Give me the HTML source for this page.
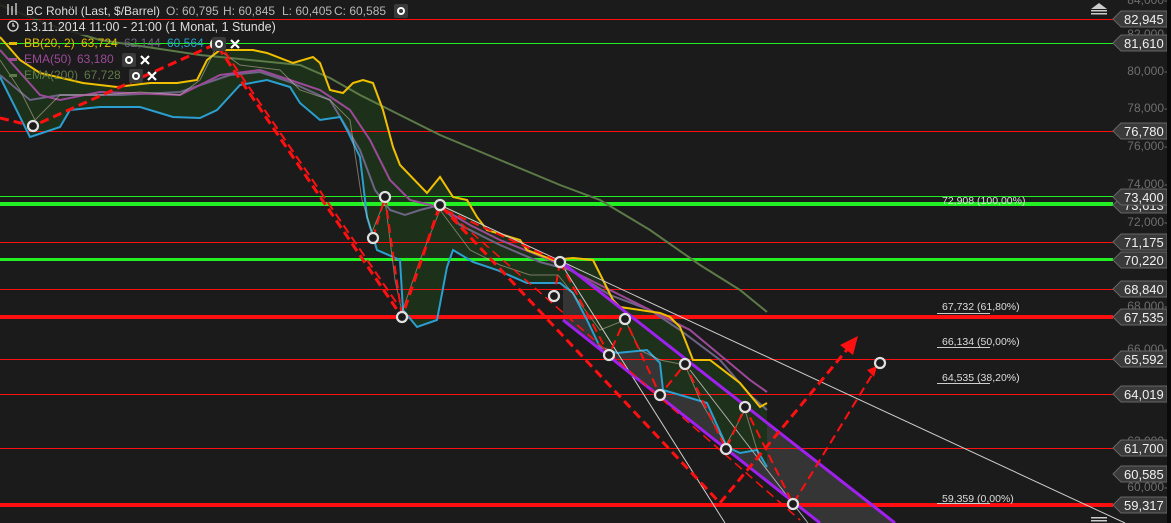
<!DOCTYPE html>
<html><head><meta charset="utf-8"><style>
html,body{margin:0;padding:0;background:#1c1b1b;width:1171px;height:523px;overflow:hidden}
svg{display:block;font-family:"Liberation Sans",sans-serif}
</style></head><body>
<svg width="1171" height="523" viewBox="0 0 1171 523">
<rect width="1171" height="523" fill="#1c1b1b"/>
<polygon points="563,263 895,523 820,523 563,320" fill="#3a3a3a" opacity="0.85"/>
<polygon fill="#1e3219" opacity="0.95" points="0,37 20,60 40,73 83,83 117,87 150,83 177,83 197,80 207,60 220,50 253,50 267,53 293,63 313,57 320,63 330,90 343,93 353,83 363,80 373,83 383,110 393,147 400,165 427,193 440,177 453,197 467,200 477,217 487,230 520,240 527,250 553,260 573,258 593,260 613,300 620,307 660,313 670,317 680,327 693,360 710,360 740,383 760,407 767,403 767,467 757,450 740,453 727,447 707,403 687,397 663,390 660,363 647,350 617,353 600,347 587,320 573,293 560,283 527,283 497,270 473,262 453,250 447,267 437,320 417,327 403,310 400,260 377,250 367,217 360,157 347,130 340,117 320,120 300,103 290,87 267,80 240,85 217,110 200,118 173,117 140,107 100,107 70,110 60,127 30,137 0,77"/>
<rect x="0" y="19" width="1113" height="1" fill="#ff1010"/>
<rect x="0" y="43" width="1113" height="1" fill="#20f020"/>
<rect x="0" y="131" width="1113" height="1" fill="#ff1010"/>
<rect x="0" y="196" width="1113" height="1" fill="#20f020"/>
<rect x="0" y="242" width="1113" height="1" fill="#ff1010"/>
<rect x="0" y="289" width="1113" height="1" fill="#ff1010"/>
<rect x="0" y="359" width="1113" height="1" fill="#ff1010"/>
<rect x="0" y="394" width="1113" height="1" fill="#ff1010"/>
<rect x="0" y="448" width="1113" height="1" fill="#ff1010"/>
<rect x="0" y="202" width="1113" height="4" fill="#22f022"/>
<rect x="0" y="258" width="1113" height="3" fill="#22f022"/>
<rect x="0" y="315" width="1113" height="4" fill="#ff1010"/>
<rect x="0" y="503" width="1113" height="4" fill="#ff1010"/>
<polyline fill="none" stroke="#5c7a48" stroke-width="2" points="0,5 50,25 100,40 200,55 300,65 330,78 360,95 400,115 440,135 500,160 560,185 600,200 650,230 700,265 740,290 767,312"/>
<polyline fill="none" stroke="#6b6484" stroke-width="2" points="0,75 30,100 60,95 120,95 180,92 230,75 260,72 290,82 330,100 360,150 375,190 390,210 405,215 420,210 440,205 460,225 500,245 540,262 570,270 610,295 650,310 680,330 720,360 750,395 767,410"/>
<polyline fill="none" stroke="#9a4a98" stroke-width="2" points="0,50 40,95 60,100 100,92 180,95 220,75 260,70 290,80 320,90 350,110 370,140 390,180 410,200 430,205 445,210 470,225 500,240 550,260 580,275 620,295 650,310 690,330 720,355 750,380 767,392"/>
<polyline fill="none" stroke="#f0c000" stroke-width="2" points="0,37 20,60 40,73 83,83 117,87 150,83 177,83 197,80 207,60 220,50 253,50 267,53 293,63 313,57 320,63 330,90 343,93 353,83 363,80 373,83 383,110 393,147 400,165 427,193 440,177 453,197 467,200 477,217 487,230 520,240 527,250 553,260 573,258 593,260 613,300 620,307 660,313 670,317 680,327 693,360 710,360 740,383 760,407 767,403"/>
<polyline fill="none" stroke="#2a9fd0" stroke-width="2" points="0,77 30,137 60,127 70,110 100,107 140,107 173,117 200,118 217,110 240,85 267,80 290,87 300,103 320,120 340,117 347,130 360,157 367,217 377,250 400,260 403,310 417,327 437,320 447,267 453,250 473,262 497,270 527,283 560,283 573,293 587,320 600,347 617,353 647,350 660,363 663,390 687,397 707,403 727,447 740,453 757,450 767,467"/>
<polyline fill="none" stroke="#d8c8b0" stroke-width="1" opacity="0.5" points="0,60 20,90 35,120 60,95 100,95 140,92 180,95 200,80 216,48 240,65 280,70 300,90 330,100 350,120 362,200 372,232 385,200 395,280 402,312 420,260 440,210 470,250 500,265 530,275 558,275 570,290 600,330 625,320 640,350 660,360 685,365 700,400 726,445 745,410 760,460 767,470"/>
<line x1="440" y1="205" x2="1125" y2="523" stroke="#cccccc" stroke-width="1"/>
<line x1="560" y1="262" x2="725" y2="523" stroke="#cccccc" stroke-width="1"/>
<line x1="690" y1="370" x2="808" y2="523" stroke="#aaaaaa" stroke-width="1"/>
<line x1="563" y1="263" x2="895" y2="523" stroke="#a020f0" stroke-width="3"/>
<line x1="563" y1="320" x2="820" y2="523" stroke="#a020f0" stroke-width="3"/>
<g fill="none" stroke="#ff1010" stroke-dasharray="9,5">
<polyline stroke-width="3" points="0,118 33,126 216,44 402,317 440,205 720,503 850,346"/>
<polyline stroke-width="2" points="225,52 398,305"/>
<polyline stroke-width="2" points="373,238 385,197 402,317"/>
<polyline stroke-width="2" points="445,210 560,262 554,296"/>
<polyline stroke-width="2" points="560,262 609,355 625,319 660,395 685,364 726,449 745,407 793,504 875,370"/>
<polyline stroke-width="1.5" points="440,205 800,520"/>
</g>
<polygon points="858,336 840,345 853,355" fill="#ff1010"/>
<polygon points="877,366 867,370 874,377" fill="#ff1010"/>
<g fill="#1c1b1b" stroke="#e0e0e0" stroke-width="2.2">
<circle cx="33" cy="126" r="5"/><circle cx="216" cy="44" r="5"/><circle cx="385" cy="197" r="5"/>
<circle cx="373" cy="238" r="5"/><circle cx="402" cy="317" r="5"/><circle cx="440" cy="205" r="5"/>
<circle cx="560" cy="262" r="5"/><circle cx="554" cy="296" r="5"/><circle cx="625" cy="319" r="5"/>
<circle cx="609" cy="355" r="5"/><circle cx="685" cy="364" r="5"/><circle cx="660" cy="395" r="5"/>
<circle cx="745" cy="407" r="5"/><circle cx="726" cy="449" r="5"/><circle cx="793" cy="504" r="5"/>
<circle cx="880" cy="363" r="5"/>
</g>
<g font-size="10.5" fill="#dddddd">
<text x="942" y="204">72,908 (100,00%)</text>
<text x="942" y="310">67,732 (61,80%)</text>
<text x="942" y="345">66,134 (50,00%)</text>
<text x="942" y="381">64,535 (38,20%)</text>
<text x="942" y="502">59,359 (0,00%)</text>
</g>
<g fill="#cccccc">
<rect x="937" y="313" width="53" height="1"/><rect x="937" y="347" width="53" height="1"/>
<rect x="937" y="383" width="53" height="1"/><rect x="937" y="503" width="53" height="1"/>
</g>
<g font-size="12" fill="#6e6e6e" text-anchor="end">
<text x="1168" y="4">84,000-</text><text x="1168" y="38">82,000-</text><text x="1168" y="75">80,000-</text>
<text x="1168" y="112">78,000-</text><text x="1168" y="150">76,000-</text><text x="1168" y="188">74,000-</text>
<text x="1168" y="226">72,000-</text><text x="1168" y="264">70,000-</text><text x="1168" y="310">68,000-</text>
<text x="1168" y="353">66,000-</text><text x="1168" y="398">64,000-</text><text x="1168" y="445">62,000-</text>
<text x="1168" y="491">60,000-</text>
</g>
<g font-size="13" fill="#f0f0f0">
<g transform="translate(0,19)"><path d="M1113,0 L1121,-8 L1167,-8 L1167,8 L1121,8 Z" fill="#3a3a3a" stroke="#666"/><text x="1124" y="5">82,945</text></g>
<g transform="translate(0,43)"><path d="M1113,0 L1121,-8 L1167,-8 L1167,8 L1121,8 Z" fill="#3a3a3a" stroke="#666"/><text x="1124" y="5">81,610</text></g>
<g transform="translate(0,131)"><path d="M1113,0 L1121,-8 L1167,-8 L1167,8 L1121,8 Z" fill="#3a3a3a" stroke="#666"/><text x="1124" y="5">76,780</text></g>
<g transform="translate(0,205)"><path d="M1113,0 L1121,-8 L1167,-8 L1167,8 L1121,8 Z" fill="#3a3a3a" stroke="#666"/><text x="1124" y="5">73,613</text></g>
<g transform="translate(0,197)"><path d="M1113,0 L1121,-8 L1167,-8 L1167,8 L1121,8 Z" fill="#3a3a3a" stroke="#666"/><text x="1124" y="5">73,400</text></g>
<g transform="translate(0,242)"><path d="M1113,0 L1121,-8 L1167,-8 L1167,8 L1121,8 Z" fill="#3a3a3a" stroke="#666"/><text x="1124" y="5">71,175</text></g>
<g transform="translate(0,260)"><path d="M1113,0 L1121,-8 L1167,-8 L1167,8 L1121,8 Z" fill="#3a3a3a" stroke="#666"/><text x="1124" y="5">70,220</text></g>
<g transform="translate(0,289)"><path d="M1113,0 L1121,-8 L1167,-8 L1167,8 L1121,8 Z" fill="#3a3a3a" stroke="#666"/><text x="1124" y="5">68,840</text></g>
<g transform="translate(0,317)"><path d="M1113,0 L1121,-8 L1167,-8 L1167,8 L1121,8 Z" fill="#3a3a3a" stroke="#666"/><text x="1124" y="5">67,535</text></g>
<g transform="translate(0,359)"><path d="M1113,0 L1121,-8 L1167,-8 L1167,8 L1121,8 Z" fill="#3a3a3a" stroke="#666"/><text x="1124" y="5">65,592</text></g>
<g transform="translate(0,394)"><path d="M1113,0 L1121,-8 L1167,-8 L1167,8 L1121,8 Z" fill="#3a3a3a" stroke="#666"/><text x="1124" y="5">64,019</text></g>
<g transform="translate(0,448)"><path d="M1113,0 L1121,-8 L1167,-8 L1167,8 L1121,8 Z" fill="#3a3a3a" stroke="#666"/><text x="1124" y="5">61,700</text></g>
<g transform="translate(0,474)"><path d="M1113,0 L1121,-8 L1167,-8 L1167,8 L1121,8 Z" fill="#3a3a3a" stroke="#666"/><text x="1124" y="5">60,585</text></g>
<g transform="translate(0,505)"><path d="M1113,0 L1121,-8 L1167,-8 L1167,8 L1121,8 Z" fill="#3a3a3a" stroke="#666"/><text x="1124" y="5">59,317</text></g>
</g>
<rect x="1167" y="0" width="4" height="523" fill="#0a0a0a"/>
<polygon points="1091,9 1099,3 1107,9" fill="#cccccc"/><rect x="1091" y="10" width="16" height="1.5" fill="#ccc"/><rect x="1091" y="13" width="16" height="1.5" fill="#ccc"/>
<rect x="1091" y="517" width="16" height="1.5" fill="#ccc"/><rect x="1091" y="520" width="16" height="1.5" fill="#ccc"/>
<rect x="0" y="0" width="412" height="19" fill="#1c1b1b" opacity="0.85"/>
<rect x="0" y="20" width="272" height="15" fill="#1c1b1b" opacity="0.85"/>
<g font-size="12">
<text x="26" y="15" fill="#dcdcdc">BC Rohöl (Last, $/Barrel)</text>
<text x="166" y="15" fill="#b8b8b8">O: 60,795</text>
<text x="223" y="15" fill="#b8b8b8">H: 60,845</text>
<text x="282" y="15" fill="#b8b8b8">L: 60,405</text>
<text x="334" y="15" fill="#b8b8b8">C: 60,585</text>
<text x="24" y="31" fill="#dcdcdc" font-size="12.5">13.11.2014 11:00 - 21:00 (1 Monat, 1 Stunde)</text>
<text x="24" y="47" fill="#e8b800">BB(20, 2)</text><text x="81" y="47" fill="#e8b800">63,724</text><text x="124" y="47" fill="#6b6484">62,144</text><text x="167" y="47" fill="#2a9fd0">60,564</text>
<text x="24" y="63" fill="#9a4a98">EMA(50)</text><text x="77" y="63" fill="#9a4a98">63,180</text>
<text x="24" y="79" fill="#5c7a48">EMA(200)</text><text x="84" y="79" fill="#5c7a48">67,728</text>
</g>
<rect x="9" y="42" width="8" height="3" fill="#e8b800"/><rect x="9" y="58" width="8" height="3" fill="#9a4a98"/><rect x="9" y="74" width="8" height="3" fill="#5c7a48"/>
<g stroke="#ddd" stroke-width="1.3" fill="none"><line x1="8" y1="4" x2="8" y2="15"/><line x1="12" y1="6" x2="12" y2="15"/><line x1="16" y1="3" x2="16" y2="15"/><circle cx="13" cy="26" r="5"/><path d="M13,23 V26 H15"/></g>
<rect x="394" y="4" width="14" height="14" rx="2" fill="#3a3a3a"/><circle cx="401" cy="11" r="3" fill="none" stroke="#fff" stroke-width="2"/>
<rect x="212" y="37" width="14" height="14" rx="2" fill="#3a3a3a"/><circle cx="219" cy="44" r="3" fill="none" stroke="#fff" stroke-width="2"/>
<rect x="122" y="53" width="14" height="14" rx="2" fill="#3a3a3a"/><circle cx="129" cy="60" r="3" fill="none" stroke="#fff" stroke-width="2"/>
<rect x="129" y="69" width="14" height="14" rx="2" fill="#3a3a3a"/><circle cx="136" cy="76" r="3" fill="none" stroke="#fff" stroke-width="2"/>
<g stroke="#fff" stroke-width="2.2"><path d="M231,40 l8,8 M239,40 l-8,8"/><path d="M141,56 l8,8 M149,56 l-8,8"/><path d="M148,72 l8,8 M156,72 l-8,8"/></g>
</svg>
</body></html>
